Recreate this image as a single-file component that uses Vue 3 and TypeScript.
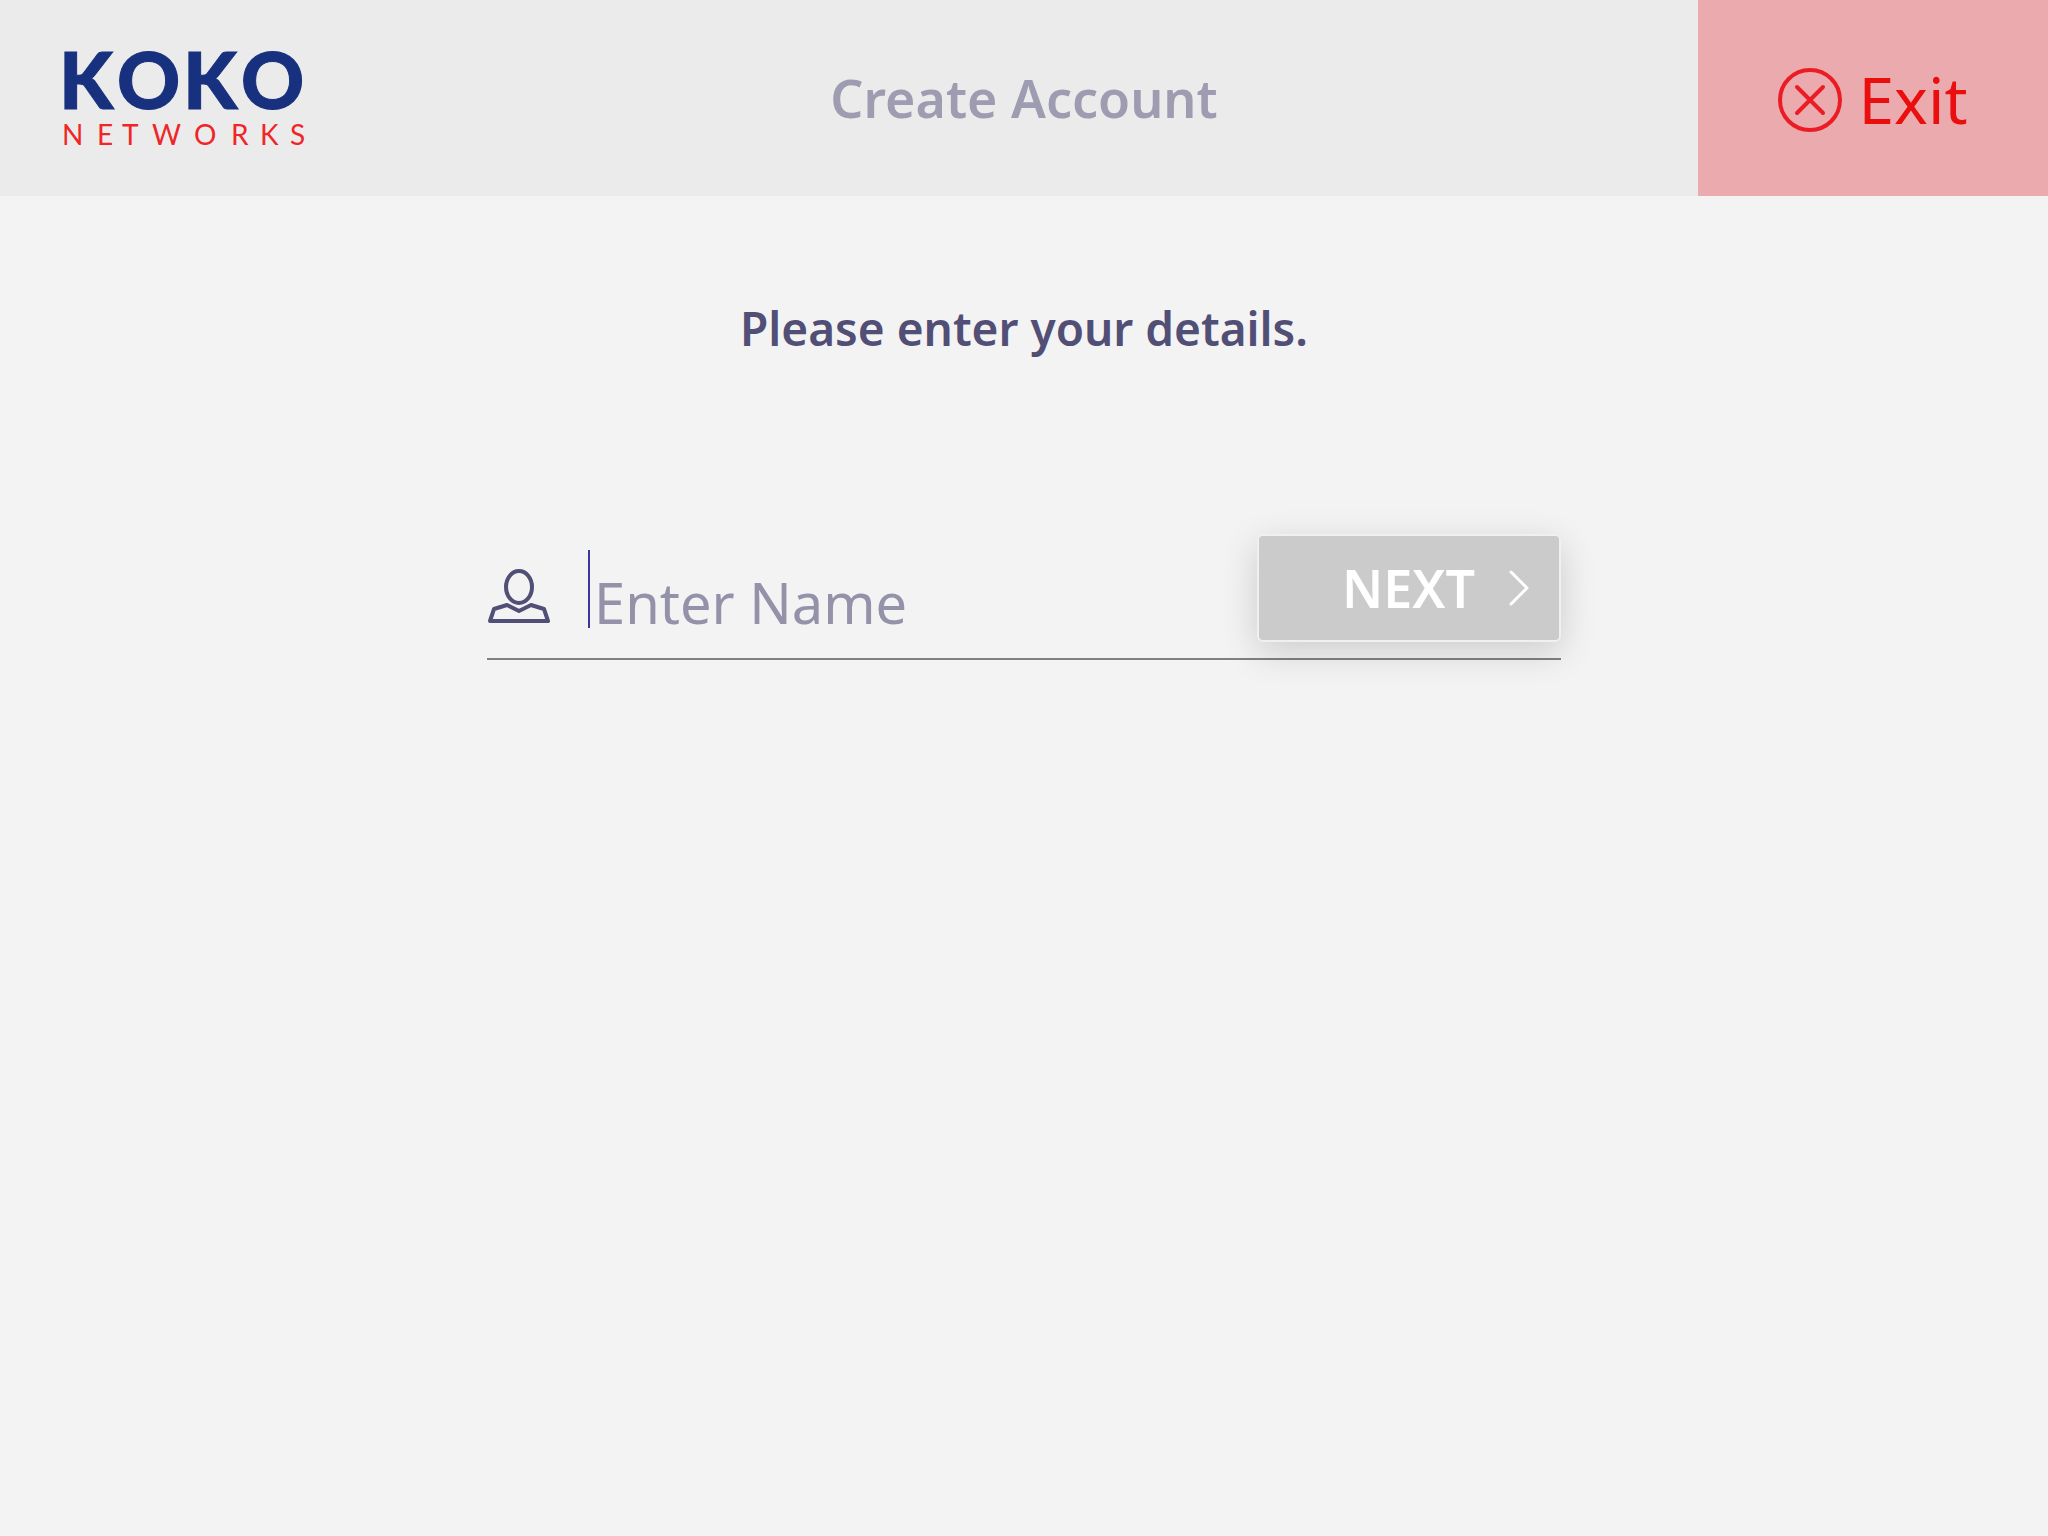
<script setup lang="ts">
import { ref } from 'vue'

const name = ref('')
</script>

<template>
  <div class="screen">
    <header class="bar">
      <div class="brand">
        <svg class="logo" viewBox="0 0 244 100" role="img" aria-label="KOKO Networks">
          <text class="logo-main" x="-5 53 119 177" y="61">KOKO</text>
          <text class="logo-sub" x="-2 33 58 88 130 167 196 226" y="97">NETWORKS</text>
        </svg>
      </div>
      <h1 class="title">Create Account</h1>
      <button class="exit" type="button">
        <svg class="exit-icon" viewBox="0 0 64 64" aria-hidden="true">
          <circle cx="32" cy="32" r="30" />
          <path d="M19 19 45 45M45 19 19 45" />
        </svg>
        <span>Exit</span>
      </button>
    </header>

    <main class="content">
      <p class="prompt">Please enter your details.</p>
      <form class="field" @submit.prevent>
        <label class="field-label" for="name" aria-label="Name">
          <svg class="person" viewBox="0 0 62 56" aria-hidden="true">
            <ellipse cx="31" cy="19" rx="13" ry="16" />
            <path d="M2 53 6 41 19 37 31 43 43 37 56 41 60 53Z" />
          </svg>
        </label>
        <span class="caret" aria-hidden="true"></span>
        <input id="name" v-model="name" class="input" type="text" placeholder="Enter Name" autocomplete="off" />
        <button class="next" type="submit">
          <span>NEXT</span>
          <svg class="chevron" viewBox="0 0 20 36" aria-hidden="true">
            <path d="M2 2 18 18 2 34" />
          </svg>
        </button>
      </form>
    </main>
  </div>
</template>

<style>
body {
  background: #f3f3f3;
}
</style>

<style scoped>
.screen {
  min-height: 100vh;
  background: #f3f3f3;
  font-family: "Noto Sans", "Open Sans", sans-serif;
}

.bar {
  display: grid;
  grid-template-columns: 350px 1fr 350px;
  height: 196px;
  background: #ebebeb;
}

.brand {
  display: flex;
  align-items: center;
  padding-left: 64px;
}

.logo {
  width: 244px;
  height: 100px;
  overflow: visible;
}

.logo-main {
  font: 900 78px Lato, sans-serif;
  fill: #18317f;
  stroke: #18317f;
  stroke-width: 1;
}

.logo-sub {
  font: 400 28px Lato, sans-serif;
  fill: #f02527;
}

.title {
  margin: 0;
  align-self: center;
  text-align: center;
  font-size: 52px;
  line-height: 72px;
  font-weight: 600;
  color: #9e9cb0;
}

.exit {
  display: flex;
  align-items: center;
  justify-content: center;
  gap: 16px;
  padding: 4px 0 0;
  border: 0;
  background: #ebabae;
  color: #ea0e0e;
  font: 400 64px/88px "Noto Sans", "Open Sans", sans-serif;
}

.exit-icon {
  width: 64px;
  height: 64px;
  fill: none;
  stroke: #ec1c24;
  stroke-width: 4;
  stroke-linecap: round;
}

.content {
  display: flex;
  flex-direction: column;
  align-items: center;
  gap: 172px;
  padding-top: 98px;
}

.prompt {
  margin: 0;
  font-size: 46px;
  line-height: 68px;
  font-weight: 600;
  color: #514f75;
}

.field {
  display: flex;
  align-items: center;
  box-sizing: border-box;
  width: 100%;
  max-width: 1074px;
  padding-bottom: 16px;
  border-bottom: 2px solid #808080;
}

.field-label {
  display: flex;
  padding: 16px 0 0 1px;
}

.person {
  width: 62px;
  height: 56px;
  fill: none;
  stroke: #514f75;
  stroke-width: 4;
  stroke-linejoin: round;
}

.caret {
  width: 2px;
  height: 78px;
  margin: 2px 0 0 38px;
  background: #3a37a0;
}

.input {
  flex: 1;
  min-width: 0;
  height: 76px;
  padding: 28px 0 0 4px;
  border: 0;
  outline: 0;
  background: transparent;
  color: #514f75;
  font: 400 56px/76px "Noto Sans", "Open Sans", sans-serif;
}

.input::placeholder {
  color: #9492a9;
  opacity: 1;
}

.next {
  display: flex;
  align-items: center;
  justify-content: flex-end;
  gap: 34px;
  box-sizing: border-box;
  width: 304px;
  height: 108px;
  padding: 0 30px 0 0;
  border: 2px solid #f0f0f0;
  border-radius: 6px;
  background: #cbcbcb;
  box-shadow: 0 10px 36px rgba(0, 0, 0, 0.16);
  color: #fff;
  font: 600 52px/72px "Noto Sans", "Open Sans", sans-serif;
}

.chevron {
  width: 20px;
  height: 36px;
  fill: none;
  stroke: #fff;
  stroke-width: 3;
  stroke-linecap: round;
  stroke-linejoin: round;
}
</style>
